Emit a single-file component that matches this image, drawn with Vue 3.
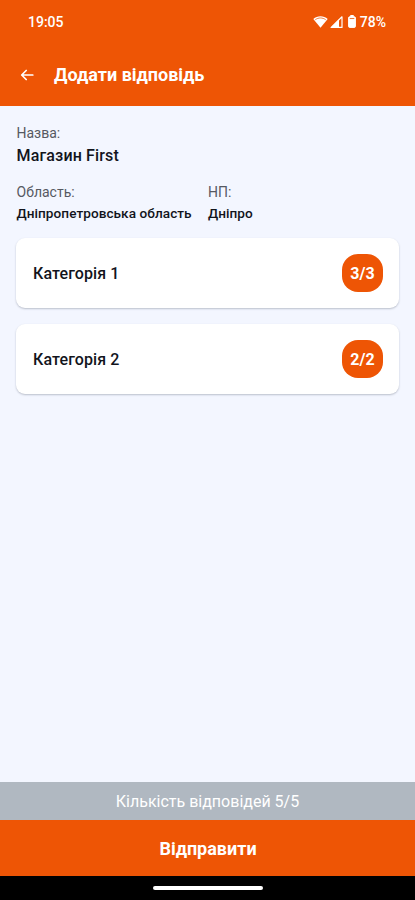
<script setup>
const categories = [
  { name: 'Категорія 1', done: 3, total: 3 },
  { name: 'Категорія 2', done: 2, total: 2 }
]
const answered = categories.reduce((sum, c) => sum + c.done, 0)
const total = categories.reduce((sum, c) => sum + c.total, 0)
</script>

<template>
  <div class="screen">
    <header class="header">
      <div class="status">
        <span class="clock">19:05</span>
        <div class="indicators">
          <svg class="wifi" width="15" height="12" viewBox="0 0 15 12">
            <path d="M0.3 3.1C4.3-.6 10.7-.6 14.7 3.1L7.5 11.8Z" fill="#fff" />
            <path d="M2.3 3.7C5.4 1.4 9.6 1.4 12.7 3.7" fill="none" stroke="#ee5505" stroke-width="1" opacity=".75" />
          </svg>
          <svg class="signal" width="13" height="12" viewBox="0 0 13 12">
            <path d="M12 .8V11.4H1.2Z" fill="none" stroke="#fff" stroke-width="1.2" stroke-linejoin="round" />
            <path d="M.5 11.9L9 3.4V11.9Z" fill="#fff" />
          </svg>
          <svg class="battery" width="8" height="13" viewBox="0 0 8 13">
            <rect x="2.3" y="0" width="3.4" height="2" fill="#fff" />
            <rect x=".6" y="1.8" width="6.8" height="10.6" rx="1" fill="#fff" stroke="#fff" />
            <path d="M1.7 3.5H6.3" stroke="#ee5505" stroke-width="1.1" opacity=".8" />
          </svg>
          <span class="percent">78%</span>
        </div>
      </div>
      <div class="toolbar">
        <svg class="back" width="14" height="12" viewBox="0 0 14 12">
          <path d="M12.8 6H1.8M6.2 1.5L1.7 6L6.2 10.5" fill="none" stroke="#fff" stroke-width="1.7" stroke-linecap="round" stroke-linejoin="round" />
        </svg>
        <h1 class="title">Додати відповідь</h1>
      </div>
    </header>

    <main class="content">
      <section class="info">
        <div class="label">Назва:</div>
        <div class="name">Магазин First</div>
        <div class="place">
          <div class="region">
            <div class="label">Область:</div>
            <div class="value">Дніпропетровська область</div>
          </div>
          <div>
            <div class="label">НП:</div>
            <div class="value">Дніпро</div>
          </div>
        </div>
      </section>
      <div class="cards">
        <div v-for="c in categories" :key="c.name" class="card">
          <span class="category">{{ c.name }}</span>
          <span class="badge">{{ c.done }}/{{ c.total }}</span>
        </div>
      </div>
    </main>

    <div class="summary"><span>Кількість відповідей {{ answered }}/{{ total }}</span></div>
    <button class="submit">Відправити</button>
    <div class="navbar"><div class="handle"></div></div>
  </div>
</template>

<style>
body {
  background: #f3f6ff;
}
</style>

<style scoped>
.screen {
  display: flex;
  flex-direction: column;
  width: 415px;
  height: 900px;
  overflow: hidden;
  background: #f3f6ff;
  font-family: Roboto, "Noto Sans", sans-serif;
  color: #12141c;
}
.header {
  height: 106px;
  flex: none;
  background: #ee5505;
  color: #fff;
}
.status {
  display: flex;
  justify-content: space-between;
  align-items: center;
  height: 43px;
  padding: 0 29px 0 28px;
}
.clock {
  font-size: 14px;
  font-weight: 500;
}
.indicators {
  display: flex;
  align-items: center;
}
.signal {
  margin-left: 2px;
}
.battery {
  margin-left: 5px;
}
.percent {
  margin-left: 4px;
  font-size: 14px;
  font-weight: 500;
}
.toolbar {
  display: flex;
  align-items: center;
  height: 63px;
  padding-left: 20px;
}
.title {
  margin: 1px 0 0 20px;
  font-size: 18px;
  line-height: 24px;
  font-weight: 700;
}
.content {
  flex: 1;
  padding: 18px 16px 0;
}
.info {
  padding-left: 0.5px;
}
.label {
  font-size: 14px;
  line-height: 18px;
  color: #565962;
}
.name {
  margin-top: 4px;
  font-size: 16px;
  line-height: 20px;
  font-weight: 500;
  letter-spacing: 0.15px;
}
.place {
  display: flex;
  margin-top: 17px;
}
.region {
  width: 191.5px;
}
.value {
  margin-top: 3px;
  font-size: 13.6px;
  line-height: 18px;
  font-weight: 500;
  letter-spacing: 0.05px;
}
.cards {
  display: flex;
  flex-direction: column;
  gap: 16px;
  margin-top: 16px;
}
.card {
  display: flex;
  align-items: center;
  justify-content: space-between;
  height: 70px;
  box-sizing: border-box;
  padding: 0 16px;
  border-radius: 9px;
  background: #fff;
  box-shadow: 0 1px 2px rgba(40, 50, 70, .28);
}
.category {
  padding: 1px 0 0 1px;
  font-size: 16px;
  font-weight: 500;
  letter-spacing: 0.1px;
}
.badge {
  display: flex;
  align-items: center;
  justify-content: center;
  width: 41px;
  height: 38px;
  border-radius: 16px;
  background: #ee5505;
  color: #fff;
  font-size: 16px;
  font-weight: 700;
}
.summary {
  display: flex;
  align-items: center;
  justify-content: center;
  height: 38px;
  flex: none;
  background: #b0b8c1;
  color: #fff;
  font-size: 16px;
}
.submit {
  height: 56px;
  flex: none;
  padding: 0 0 0 1px;
  border: 0;
  background: #ee5505;
  color: #fff;
  font-family: inherit;
  font-size: 18px;
  font-weight: 700;
}
.navbar {
  display: flex;
  justify-content: center;
  height: 24px;
  flex: none;
  padding-top: 10px;
  box-sizing: border-box;
  background: #000;
}
.handle {
  width: 110px;
  height: 4px;
  border-radius: 2px;
  background: #fff;
}
</style>
